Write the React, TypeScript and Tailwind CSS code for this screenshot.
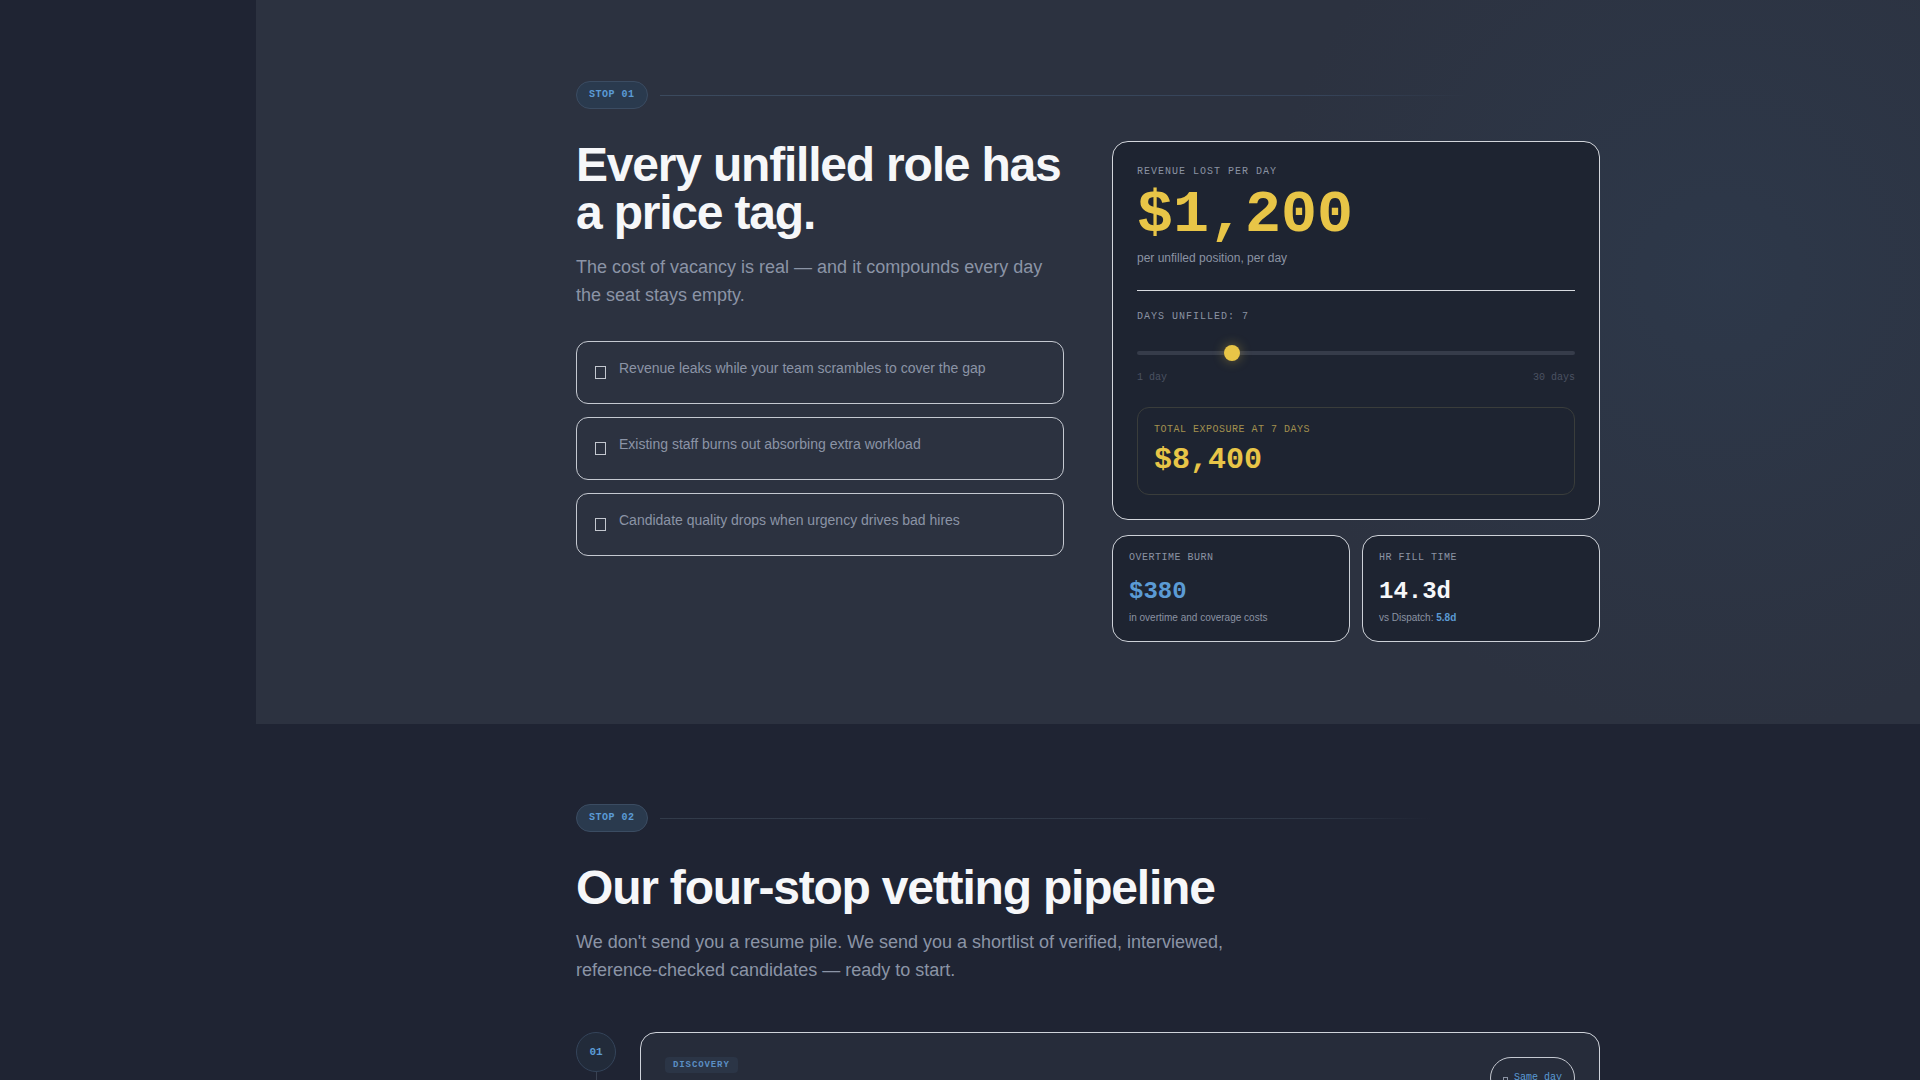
import React, { useState } from 'react';

const mono = "font-['Liberation_Mono',monospace]";

// Empty-box glyph the emoji icons fall back to
const Tofu = ({ className }: { className: string }) => (
  <span className={`inline-block border ${className}`} />
);

const StopBadge: React.FC<{ label: string; line: string }> = ({ label, line }) => (
  <div className="flex items-center gap-3">
    <span className={`rounded-full border border-[#3b4c62] bg-[#2a3a4e] px-3 py-[5px] ${mono} text-[10px] font-bold leading-4 tracking-wider text-[#5b9bd5]`}>
      {label}
    </span>
    <div className={`h-px flex-1 ${line}`} />
  </div>
);

const pains = [
  'Revenue leaks while your team scrambles to cover the gap',
  'Existing staff burns out absorbing extra workload',
  'Candidate quality drops when urgency drives bad hires',
];

const stops = [
  { n: '01', tag: 'DISCOVERY', time: 'Same day', title: 'We learn the role before we search', body: 'A 20-minute intake call covering shift patterns, must-have certifications and the people your new hire will work beside.' },
  { n: '02', tag: 'SCREENING', time: '24 hours', title: 'Licenses, history and skills verified', body: 'Every candidate is checked against the requirements you set, so nothing reaches you that would fail on day one.' },
  { n: '03', tag: 'INTERVIEW', time: '48 hours', title: 'Structured interviews by our recruiters', body: 'Scored against the same rubric for every role, with notes you can read in two minutes.' },
  { n: '04', tag: 'REFERENCES', time: '72 hours', title: 'Two references, called and written up', body: 'You get a shortlist of people who are verified, interviewed and ready to start.' },
];

const SmallStat: React.FC<{ label: string; value: string; valueClass: string; children: React.ReactNode }> = ({ label, value, valueClass, children }) => (
  <div className="rounded-2xl border border-[#cdd1d8] bg-[#1e2431] p-4">
    <p className={`${mono} text-[10px] leading-3 tracking-wider text-[#8b93a3]`}>{label}</p>
    <p className={`mt-4 ${mono} text-2xl font-bold leading-none ${valueClass}`}>{value}</p>
    <p className="mt-[7px] text-[10px] leading-[14px] text-[#8b93a3]">{children}</p>
  </div>
);

export default function App() {
  const [days] = useState(7);
  const perDay = 1200;
  const pct = ((days - 1) / 29) * 100;
  const exposure = (perDay * days).toLocaleString('en-US');

  return (
    <div className="flex min-h-screen bg-[#1f2433] font-['Liberation_Sans',Arial,sans-serif] text-white">
      <aside className="w-64 shrink-0 bg-[#1f2433]" />

      <main className="min-w-0 flex-1">
        {/* Stop 01: cost of vacancy */}
        <section className="bg-[#2c3240] bg-[image:radial-gradient(circle_at_88%_38%,rgba(46,60,80,0.6),transparent_30%)] pb-[82px] pt-[81px]">
          <div className="mx-auto max-w-5xl">
            <StopBadge label="STOP 01" line="bg-[linear-gradient(to_right,#3b4a5e,#36445a_70%,transparent_86%)]" />

            <div className="mt-8 grid grid-cols-2 items-start gap-12">
              <div>
                <h2 className="text-5xl font-bold leading-none tracking-tight text-[#f6f7f9]">
                  Every unfilled role has<br />a price tag.
                </h2>
                <p className="mt-4 text-lg leading-7 text-[#8b94a6]">
                  The cost of vacancy is real — and it compounds every day the seat stays empty.
                </p>
                <ul className="mt-8 flex flex-col gap-[13px]">
                  {pains.map(p => (
                    <li key={p} className="flex items-start gap-3 rounded-xl border border-[#c5c9d1] p-4">
                      <span className="flex h-[29px] w-[14px] shrink-0 items-center justify-center">
                        <Tofu className="h-[13px] w-[11px] border-[#c3c7cf]" />
                      </span>
                      <span className="text-sm leading-5 text-[#8b94a6]">{p}</span>
                    </li>
                  ))}
                </ul>
              </div>

              <div>
                <div className="rounded-2xl border border-[#d3d6dc] bg-[#1e2431] p-6">
                  <div className="border-b border-[#d8dbe0] pb-6">
                    <p className={`${mono} text-[10px] leading-3 tracking-widest text-[#8b93a3]`}>REVENUE LOST PER DAY</p>
                    <p className={`mt-[7px] ${mono} text-6xl font-bold leading-none text-[#e8c547]`}>${perDay.toLocaleString('en-US')}</p>
                    <p className="mt-[5px] text-xs leading-4 text-[#8b93a3]">per unfilled position, per day</p>
                  </div>

                  <p className={`pt-5 ${mono} text-[10px] leading-3 tracking-widest text-[#8b93a3]`}>DAYS UNFILLED: {days}</p>
                  <div className="relative mt-[22px] flex h-4 items-center">
                    <div className="h-1 w-full rounded-full bg-[#363c4a]" />
                    <div
                      className="absolute top-0 h-4 w-4 rounded-full bg-[#e8c547] shadow-[0_0_12px_rgba(232,197,71,0.4)]"
                      style={{ left: `calc(${pct}% - ${(pct * 16) / 100}px)` }}
                    />
                  </div>
                  <div className={`mt-[11px] flex justify-between ${mono} text-[10px] leading-3 text-[#4b5262]`}>
                    <span>1 day</span>
                    <span>30 days</span>
                  </div>

                  <div className="mt-[23px] rounded-xl border border-[#3a3d3b] px-4 pb-[19px] pt-4">
                    <p className={`${mono} text-[10px] leading-3 tracking-wider text-[#a3914f]`}>TOTAL EXPOSURE AT {days} DAYS</p>
                    <p className={`mt-[9px] ${mono} text-3xl font-bold leading-none text-[#e8c547]`}>${exposure}</p>
                  </div>
                </div>

                <div className="mt-[15px] grid grid-cols-2 gap-3">
                  <SmallStat label="OVERTIME BURN" value="$380" valueClass="text-[#5b9bd5]">
                    in overtime and coverage costs
                  </SmallStat>
                  <SmallStat label="HR FILL TIME" value="14.3d" valueClass="text-[#f6f7f9]">
                    vs Dispatch: <b className="font-bold text-[#5b9bd5]">5.8d</b>
                  </SmallStat>
                </div>
              </div>
            </div>
          </div>
        </section>

        {/* Stop 02: vetting pipeline */}
        <section className="py-20">
          <div className="mx-auto max-w-5xl">
            <StopBadge label="STOP 02" line="bg-[linear-gradient(to_right,#323b4a,#2e3746_70%,transparent_82%)]" />
            <h2 className="mt-8 text-5xl font-bold leading-none tracking-tight text-[#f6f7f9]">Our four-stop vetting pipeline</h2>
            <p className="mt-4 max-w-2xl text-lg leading-7 text-[#8b94a6]">
              We don't send you a resume pile. We send you a shortlist of verified, interviewed, reference-checked candidates — ready to start.
            </p>

            <div className="mt-12 flex flex-col">
              {stops.map(s => (
                <div key={s.n} className="flex gap-6">
                  <div className="flex flex-col items-center">
                    <div className={`flex h-10 w-10 shrink-0 items-center justify-center rounded-full border border-[#34445a] bg-[#222b3a] ${mono} text-[11px] font-bold text-[#5b9bd5]`}>
                      {s.n}
                    </div>
                    <div className="w-px flex-1 bg-[#3a4252]" />
                  </div>
                  <div className="mb-6 flex-1 rounded-2xl border border-[#cfd3da] bg-[#262c3a] p-6">
                    <div className="flex items-start justify-between">
                      <span className={`rounded bg-[#2b3546] px-2 py-0.5 ${mono} text-[9px] font-bold leading-3 tracking-widest text-[#5b8fc4]`}>
                        {s.tag}
                      </span>
                      <span className={`flex items-center gap-1.5 rounded-full border border-[#c5c9d1] px-3 py-3 ${mono} text-[10px] leading-4 text-[#5b9bd5]`}>
                        <Tofu className="mt-1 h-[7px] w-[5px] border-[#8b93a3]" />
                        {s.time}
                      </span>
                    </div>
                    <h3 className="mt-3 text-xl font-bold text-[#f6f7f9]">{s.title}</h3>
                    <p className="mt-2 text-sm leading-6 text-[#8b94a6]">{s.body}</p>
                  </div>
                </div>
              ))}
            </div>
          </div>
        </section>
      </main>
    </div>
  );
}
